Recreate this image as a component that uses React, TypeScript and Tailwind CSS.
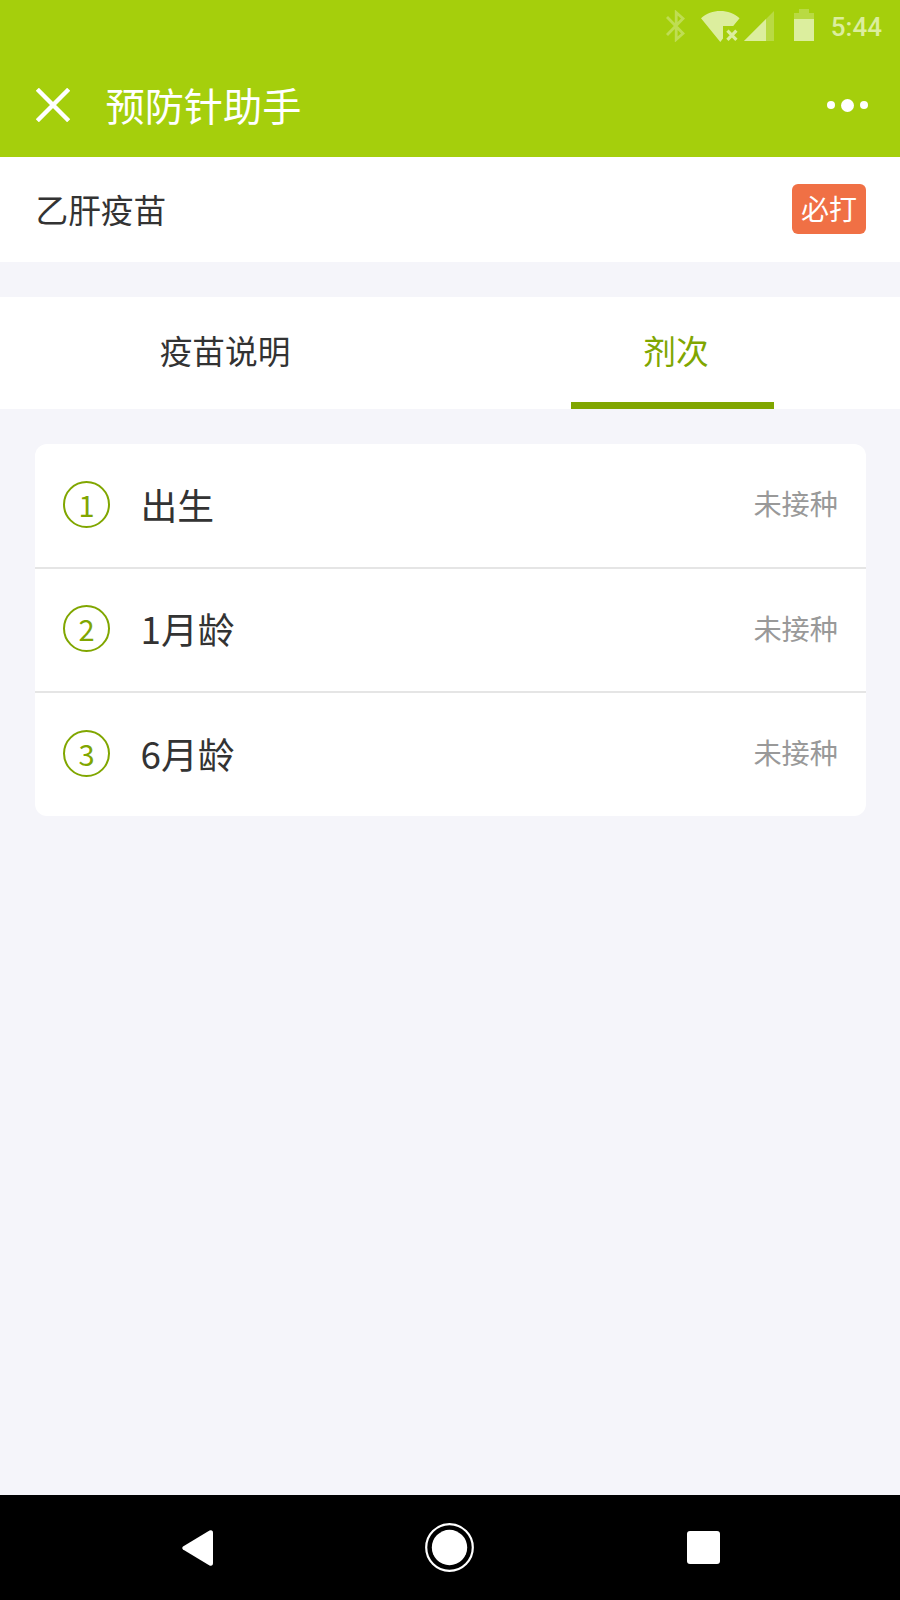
const doses = [
  { id: 1, name: "出生", status: "未接种" },
  { id: 2, name: "1月龄", status: "未接种" },
  { id: 3, name: "6月龄", status: "未接种" },
];

function StatusBar() {
  return (
    <div className="flex h-[53px] items-start justify-end pr-[18px] text-[#dcee9e]">
      <svg className="mt-[10px] mr-4" width="19" height="32" viewBox="0 0 19 32" fill="none" stroke="#bfdd53" strokeWidth="2.8">
        <path d="M1 7L17 23.5L10.2 29.5V2.5L17 8.5L1 25" />
      </svg>
      <svg className="mt-[11px] mr-1" width="39" height="31" viewBox="0 0 39 31">
        <path d="M0 7.2C5.5 2.3 12 0 19.3 0C26.6 0 33.1 2.3 38.6 7.2L32.2 15H22V27.5L19.3 31Z" fill="currentColor" />
        <path d="M26.4 19.6L35.4 28.8M35.4 19.6L26.4 28.8" stroke="currentColor" strokeWidth="3.2" />
      </svg>
      <svg className="mt-[11px] mr-5" width="30" height="30" viewBox="0 0 30 30">
        <path d="M30 0V30H0Z" fill="#b9da43" />
        <path d="M22 8V30H0Z" fill="currentColor" />
      </svg>
      <svg className="mt-[9px] mr-[17px]" width="20" height="32" viewBox="0 0 20 32">
        <path d="M5 0H15V4H20V10H0V4H5Z" fill="#b9da43" />
        <path d="M0 10H20V32H0Z" fill="currentColor" />
      </svg>
      <span className="mt-[12px] font-['Roboto'] text-[26px] leading-[30px] font-medium">5:44</span>
    </div>
  );
}

function TitleBar() {
  return (
    <div className="flex h-[104px] items-center pr-8 pl-9 text-white">
      <svg width="34" height="34" viewBox="0 0 34 34" stroke="currentColor" strokeWidth="4.4">
        <path d="M1.3 1.3L32.7 32.7M32.7 1.3L1.3 32.7" />
      </svg>
      <h1 className="ml-[35.5px] flex-1 pb-0.5 text-[39.2px] leading-[58px]">预防针助手</h1>
      <div className="flex items-center gap-[6px]">
        <span className="size-2 rounded-full bg-white" />
        <span className="size-[13px] rounded-full bg-white" />
        <span className="size-2 rounded-full bg-white" />
      </div>
    </div>
  );
}

export default function App() {
  return (
    <div className="flex h-[1600px] w-[900px] flex-col bg-[#f5f5fa] font-['Noto_Sans_CJK_SC',sans-serif] text-[#333]">
      <header className="h-[157px] bg-[#a5cf0c]">
        <StatusBar />
        <TitleBar />
      </header>

      {/* Vaccine name */}
      <section className="flex h-[105px] items-center justify-between bg-white pr-[34px] pb-0.5 pl-[35.5px]">
        <h2 className="pt-px text-[32.7px] leading-[48px]">乙肝疫苗</h2>
        <span className="flex h-[50px] w-[74px] items-center justify-center rounded-md bg-[#f07045] pb-0.5 text-[28px] text-white">
          必打
        </span>
      </section>

      {/* Tabs */}
      <nav className="mt-[35px] grid h-[112px] grid-cols-2 bg-white text-[32.7px] leading-[48px]">
        <button className="flex justify-center pt-[29px]">疫苗说明</button>
        <button className="flex flex-col items-center justify-between pt-[29px] text-[#80a600]">
          <span className="pl-0.5">剂次</span>
          <span className="mr-[5px] h-[7px] w-[203px] bg-[#80a600]" />
        </button>
      </nav>

      {/* Dose list */}
      <ul className="mt-[35px] mr-[34px] ml-[35px] rounded-xl bg-white">
        {doses.map((dose) => (
          <li
            key={dose.id}
            className="flex h-[124.6px] items-center border-b-2 border-[#e5e5e5] pr-7 pb-0.5 pl-7 last:h-[122.6px] last:border-b-0"
          >
            <span className="flex size-[47px] items-center justify-center rounded-full border-2 border-[#80a600] text-[29px] text-[#80a600]">
              {dose.id}
            </span>
            <span className="ml-[30.5px] flex-1 text-[36.8px]">{dose.name}</span>
            <span className="pb-0.5 text-[28.2px] text-[#999]">{dose.status}</span>
          </li>
        ))}
      </ul>

      {/* System navigation */}
      <footer className="mt-auto flex h-[105px] items-center bg-black pl-[182px] text-white">
        <svg width="31" height="36" viewBox="0 0 31 36" fill="currentColor">
          <path d="M1 16.5L27.5 0.5Q31 -0.5 31 3V33Q31 36.5 27.5 35.5L1 19.5Q-0.5 18 1 16.5Z" />
        </svg>
        <svg className="ml-[212px]" width="49" height="49" viewBox="0 0 49 49">
          <circle cx="24.5" cy="24.5" r="23.3" fill="none" stroke="currentColor" strokeWidth="2.2" />
          <circle cx="24.5" cy="24.5" r="17.7" fill="currentColor" />
        </svg>
        <span className="ml-[213px] size-[33px] rounded-[3px] bg-white" />
      </footer>
    </div>
  );
}
